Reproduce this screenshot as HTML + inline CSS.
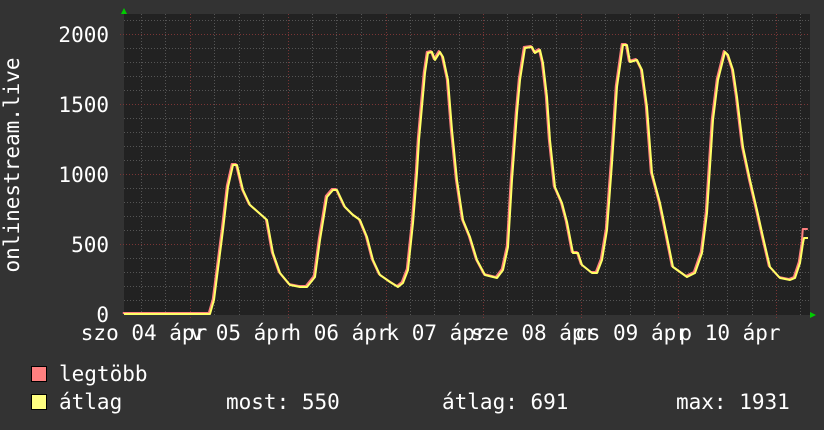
<!DOCTYPE html>
<html><head><meta charset="utf-8"><style>
html,body{margin:0;padding:0;background:#333;}
svg{display:block}
text{font-family:"DejaVu Sans Mono","Liberation Mono",monospace;fill:#fff;font-size:21px}
</style></head><body>
<svg width="824" height="430" viewBox="0 0 824 430" xmlns="http://www.w3.org/2000/svg">
<rect width="824" height="430" fill="#333"/>
<rect x="124" y="14" width="686" height="301" fill="#222"/>
<g stroke="#555" stroke-width="1" stroke-dasharray="1,2">
<path d="M141.5 14V315M165.5 14V315M214.5 14V315M239.5 14V315M263.5 14V315M312.5 14V315M336.5 14V315M361.5 14V315M410.5 14V315M434.5 14V315M459.5 14V315M507.5 14V315M532.5 14V315M556.5 14V315M605.5 14V315M630.5 14V315M654.5 14V315M703.5 14V315M727.5 14V315M752.5 14V315M800.5 14V315"/>
<path d="M124 20.5H810M124 48.5H810M124 62.5H810M124 76.5H810M124 90.5H810M124 118.5H810M124 132.5H810M124 146.5H810M124 160.5H810M124 188.5H810M124 202.5H810M124 216.5H810M124 230.5H810M124 258.5H810M124 272.5H810M124 286.5H810M124 300.5H810"/>
</g>
<g stroke="#7a3535" stroke-width="1" stroke-dasharray="1,2">
<path d="M190.5 14V318M288.5 14V318M386.5 14V318M483.5 14V318M581.5 14V318M678.5 14V318M776.5 14V318"/>
<path d="M120 34.5H810M120 104.5H810M120 174.5H810M120 244.5H810"/>
</g>
<polygon points="121,14 127,14 124,8" fill="#0c0"/>
<polygon points="810,312 810,318 816,315" fill="#0c0"/>
<g fill="none" stroke-width="2" stroke-linejoin="round">
<polyline stroke="#ff8080" transform="translate(-1.2,-1)" points="124,314 210,314 214,300 223,230 228,187 233,165 237,165 243,190 250,205 258,212 267,220 273,253 280,273 290,285 300,287 307,287 315,277 320,240 327,197 333,190 337,190 345,207 353,215 360,220 367,237 373,260 380,275 390,282 398,287 403,283 408,270 413,223 417,173 419,140 425,73 428,53 432,52 435,60 440,52 443,57 448,80 452,130 457,180 463,220 470,237 477,260 485,275 497,278 503,270 508,247 512,180 517,113 520,80 525,48 532,47 535,53 540,50 543,63 547,97 550,140 555,187 562,203 567,222 573,253 578,253 582,265 592,273 597,273 602,260 607,230 612,163 617,87 623,45 627,45 630,62 637,60 642,70 647,107 652,173 660,203 667,237 673,267 687,277 695,273 702,253 707,213 713,120 718,80 725,52 728,55 733,70 737,97 743,147 750,180 757,210 763,237 770,267 780,278 790,280 795,278 800,263 803,243 804,230 809,230"/>
<polyline stroke="#ffff66" points="124,314 210,314 214,300 223,230 228,187 233,165 237,165 243,190 250,205 258,212 267,220 273,253 280,273 290,285 300,287 307,287 315,277 320,240 327,197 333,190 337,190 345,207 353,215 360,220 367,237 373,260 380,275 390,282 398,287 403,283 408,270 413,223 417,173 419,140 425,73 428,53 432,52 435,60 440,52 443,57 448,80 452,130 457,180 463,220 470,237 477,260 485,275 497,278 503,270 508,247 512,180 517,113 520,80 525,48 532,47 535,53 540,50 543,63 547,97 550,140 555,187 562,203 567,222 573,253 578,253 582,265 592,273 597,273 602,260 607,230 612,163 617,87 623,45 627,45 630,62 637,60 642,70 647,107 652,173 660,203 667,237 673,267 687,277 695,273 702,253 707,213 713,120 718,80 725,52 728,55 733,70 737,97 743,147 750,180 757,210 763,237 770,267 780,278 790,280 795,278 800,263 803,243 804,238 808,238"/>
</g>
<g text-anchor="end">
<text x="109" y="42">2000</text>
<text x="109" y="112">1500</text>
<text x="109" y="182">1000</text>
<text x="109" y="252">500</text>
<text x="109" y="322">0</text>
</g>
<text transform="translate(19,165) rotate(-90)" text-anchor="middle">onlinestream.live</text>
<g text-anchor="middle">
<text x="144" y="340">szo 04 ápr</text>
<text x="241" y="340">v 05 ápr</text>
<text x="339" y="340">h 06 ápr</text>
<text x="437" y="340">k 07 ápr</text>
<text x="534" y="340">sze 08 ápr</text>
<text x="632" y="340">cs 09 ápr</text>
<text x="730" y="340">p 10 ápr</text>
</g>
<rect x="31.5" y="366.5" width="15" height="15" fill="#ff8080" stroke="#000"/>
<rect x="31.5" y="394.5" width="15" height="15" fill="#ffff80" stroke="#000"/>
<text x="59" y="381">legtöbb</text>
<text x="59" y="409">átlag</text>
<text x="226" y="409">most: 550</text>
<text x="442" y="409">átlag: 691</text>
<text x="676" y="409">max: 1931</text>
</svg>
</body></html>
